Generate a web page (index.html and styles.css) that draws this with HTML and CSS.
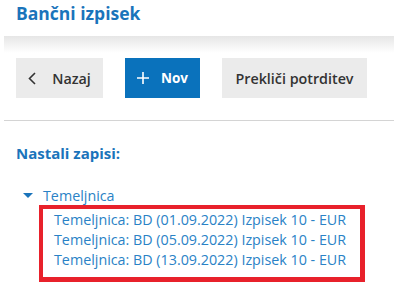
FILE: index.html
```html
<!DOCTYPE html>
<html>
<head>
<meta charset="utf-8">
<link rel="stylesheet" href="styles.css">
</head>
<body>
<div class="page">
  <h1 class="title">Bančni izpisek</h1>
  <div class="band"></div>
  <div class="toolbar">
    <button class="btn btn-gray btn-back"><svg class="ico" width="8" height="13" viewBox="0 0 8 13"><path d="M7 1 L1.5 6.5 L7 12" fill="none" stroke="#333" stroke-width="1.6"/></svg><span>Nazaj</span></button>
    <button class="btn btn-blue"><svg class="ico" width="12" height="12" viewBox="0 0 12 12"><path d="M6 0 V12 M0 6 H12" fill="none" stroke="#fff" stroke-width="1.6"/></svg><span>Nov</span></button>
    <button class="btn btn-gray btn-cancel">Prekliči potrditev</button>
  </div>
  <div class="sep"></div>
  <h2 class="subtitle">Nastali zapisi:</h2>
  <div class="tree">
    <div class="node"><span class="tri"></span><a class="link">Temeljnica</a></div>
    <div class="box">
      <a class="link row">Temeljnica: BD (01.09.2022) Izpisek 10 - EUR</a>
      <a class="link row">Temeljnica: BD (05.09.2022) Izpisek 10 - EUR</a>
      <a class="link row">Temeljnica: BD (13.09.2022) Izpisek 10 - EUR</a>
    </div>
  </div>
</div>
</body>
</html>
```
FILE: styles.css
```css
html, body {
  margin: 0;
  padding: 0;
  background: #fff;
}
body {
  font-family: "Open Sans", "Liberation Sans", sans-serif;
  width: 394px;
  height: 306px;
  overflow: hidden;
}
.page {
  padding-left: 4px;
}
.title {
  margin: 1px 0 0 12px;
  font-size: 17.5px;
  line-height: 24px;
  font-weight: 700;
  color: #1a74bb;
}
.band {
  margin-top: 11px;
  height: 17px;
  background: linear-gradient(to bottom, #e6e6e6, #ffffff);
}
.toolbar {
  display: flex;
  gap: 22px;
  margin: 5px 0 0 12px;
}
.btn {
  height: 40px;
  border: 0;
  padding: 0;
  display: flex;
  align-items: center;
  justify-content: center;
  font-family: inherit;
  font-size: 14.3px;
  font-weight: 600;
  color: #333;
}
.btn-gray {
  background: #ebebeb;
}
.btn-back {
  width: 87px;
}
.btn-cancel {
  width: 145px;
}
.btn-blue {
  width: 75px;
  background: #0a72bc;
  color: #fff;
  font-weight: 700;
  font-size: 13.5px;
}
.btn-blue .ico {
  margin-right: 12px;
}
.btn-back .ico {
  margin-right: 16px;
}
.sep {
  margin-top: 22px;
  height: 1px;
  background: #d4d4d4;
}
.subtitle {
  margin: 22px 0 0 12px;
  font-size: 15px;
  line-height: 20px;
  font-weight: 700;
  color: #1a74bb;
}
.tree {
  margin: 23px 0 0 19px;
}
.node {
  display: flex;
  align-items: center;
  height: 19px;
}
.tri {
  width: 0;
  height: 0;
  border-left: 5px solid transparent;
  border-right: 5px solid transparent;
  border-top: 5px solid #1a74bb;
  margin-right: 10px;
}
.link {
  font-size: 14.3px;
  color: #2a82c6;
  line-height: 19px;
}
.box {
  margin-left: 16px;
  width: 326px;
  border: 4px solid #e8212b;
  border-bottom-width: 5px;
  border-right-width: 5px;
  padding: 1px 0 0 11px;
  box-sizing: border-box;
  height: 77px;
  display: flex;
  flex-direction: column;
}
.row {
  line-height: 20px;
}
```
